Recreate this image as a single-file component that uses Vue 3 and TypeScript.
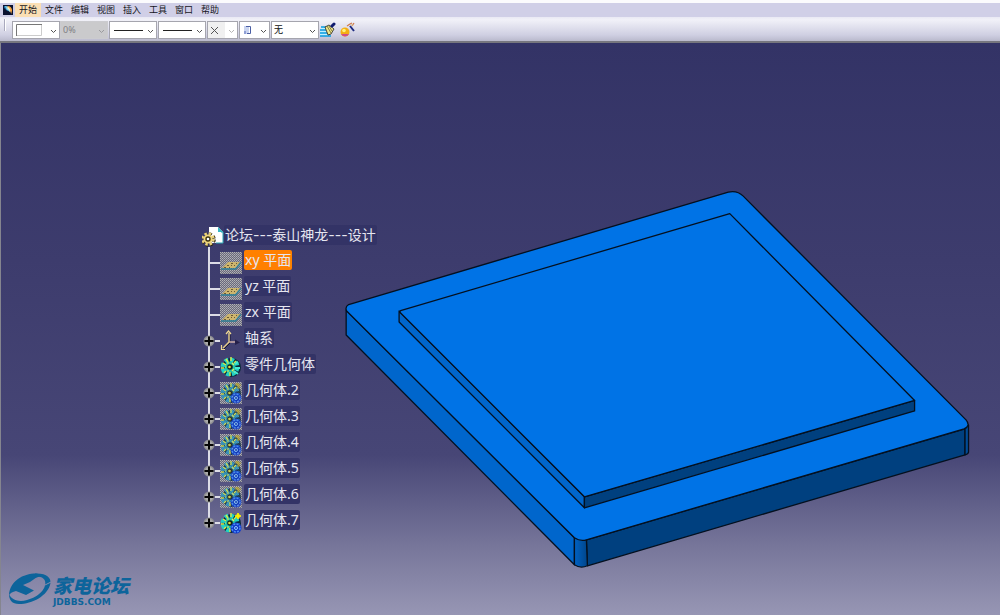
<script setup lang="ts">
import { ref } from 'vue'

type IconKind = 'plane' | 'axis' | 'part' | 'body' | 'active'

interface TreeNode {
  label: string
  icon: IconKind
  expandable: boolean
}

interface Combo {
  name: string
  kind: 'color' | 'opacity' | 'line' | 'point' | 'render' | 'layer'
  options: string[]
  narrow?: boolean
  disabled?: boolean
}

const menus: string[] = ['开始', '文件', '编辑', '视图', '插入', '工具', '窗口', '帮助']
const activeMenu = ref('开始')

const combos: Combo[] = [
  { name: '颜色', kind: 'color', options: ['自动'] },
  { name: '透明度', kind: 'opacity', options: ['0%'], disabled: true },
  { name: '线宽', kind: 'line', options: ['1'] },
  { name: '线型', kind: 'line', options: ['1'] },
  { name: '点', kind: 'point', options: ['1'], narrow: true },
  { name: '渲染', kind: 'render', options: ['1'], narrow: true },
  { name: '图层', kind: 'layer', options: ['无'] },
]

const nodes: TreeNode[] = [
  { label: 'xy 平面', icon: 'plane', expandable: false },
  { label: 'yz 平面', icon: 'plane', expandable: false },
  { label: 'zx 平面', icon: 'plane', expandable: false },
  { label: '轴系', icon: 'axis', expandable: true },
  { label: '零件几何体', icon: 'part', expandable: true },
  { label: '几何体.2', icon: 'body', expandable: true },
  { label: '几何体.3', icon: 'body', expandable: true },
  { label: '几何体.4', icon: 'body', expandable: true },
  { label: '几何体.5', icon: 'body', expandable: true },
  { label: '几何体.6', icon: 'body', expandable: true },
  { label: '几何体.7', icon: 'active', expandable: true },
]
const selected = ref('xy 平面')
</script>

<template>
  <div class="app">
    <nav class="menubar" aria-label="菜单">
      <svg class="app-icon" viewBox="0 0 11 11" aria-hidden="true">
        <rect width="11" height="11" fill="#0b1230" />
        <path d="M1 1h4l1 3-1 3-4-4z" fill="#1f6fa8" />
        <path d="M2 1l4 1 2 6-4-3z" fill="#7fd4ee" />
        <path d="M5 1c3 0 5 2 5 5l-1 4C8 6 7 4 5 3z" fill="#f3a13c" />
        <path d="M5 2c2 1 3 2 3 6C7 6 6 4 5 4z" fill="#fff3c8" />
      </svg>
      <button
        v-for="m in menus"
        :key="m"
        type="button"
        class="menu"
        :class="{ active: m === activeMenu }"
        @click="activeMenu = m"
      >{{ m }}</button>
    </nav>

    <div class="toolbar" role="toolbar" aria-label="图形属性">
      <span class="grip"></span>
      <label
        v-for="c in combos"
        :key="c.name"
        class="combo"
        :class="[c.kind, { narrow: c.narrow }]"
      >
        <select :aria-label="c.name" :disabled="c.disabled">
          <option v-for="o in c.options" :key="o">{{ o }}</option>
        </select>
        <svg v-if="c.kind === 'color'" class="sample" viewBox="0 0 36 16" aria-hidden="true">
          <rect x="3" y="2" width="26" height="12" fill="#fff" />
          <path d="M3.500 14V2.500H29" fill="none" stroke="#777" />
          <path d="M4 13.500H28.500V3" fill="none" stroke="#ccc" />
        </svg>
        <svg v-else-if="c.kind === 'line'" class="sample" viewBox="0 0 36 16" aria-hidden="true">
          <path d="M4 8.500H33" stroke="#222" />
        </svg>
        <svg v-else-if="c.kind === 'point'" class="sample" viewBox="0 0 36 16" aria-hidden="true">
          <rect width="17" height="16" fill="#f0f0f0" />
          <path d="M3 5l7 7M10 5l-7 7" stroke="#555" />
        </svg>
        <svg v-else-if="c.kind === 'render'" class="sample" viewBox="0 0 36 16" aria-hidden="true">
          <rect x="4" y="4" width="5" height="8" fill="#c9d4f0" />
          <path d="M6 4.500H10.500V11.500H7" fill="none" stroke="#4a5ea4" />
          <rect x="4" y="9" width="2" height="3" fill="#8f9fd4" />
        </svg>
        <svg class="chevron" viewBox="0 0 7 5" aria-hidden="true">
          <path d="M1 1l2.500 2.500L6 1" fill="none" stroke="currentColor" />
        </svg>
      </label>
      <button type="button" class="tool" aria-label="格式刷">
        <svg viewBox="0 0 16 16" aria-hidden="true">
          <path d="M2 5h6L5 8H0zM0 9h6l3 5H0z" fill="#bff0ff" />
          <path d="M1 5h6M0 8h6M0 11h8M0 14h11" stroke="#0a9be0" stroke-width="1.500" />
          <path d="M5 5l4-2 5 4-3 5-3 1z" fill="#efe78a" stroke="#222" stroke-width=".8" />
          <path d="M7 4l4 7M9 4l3 5" stroke="#6b6330" stroke-width=".8" />
          <path d="M12 4l2-2" stroke="#101c6e" stroke-width="3" stroke-linecap="round" />
        </svg>
      </button>
      <button type="button" class="tool" aria-label="图形属性向导">
        <svg viewBox="0 0 16 16" aria-hidden="true">
          <circle cx="5" cy="10" r="4.500" fill="#f4ae13" />
          <path d="M1 12a4.500 4.500 0 0 0 8 0z" fill="#cf4c8c" />
          <circle cx="4" cy="8.500" r="1.800" fill="#fff27a" />
          <path d="M10 4l4 5" stroke="#1d2a80" stroke-width="2" />
          <path d="M7 4l3-2M10 2l2-1M12 4l2-3" stroke="#d07a4b" stroke-width="1.300" />
          <path d="M11 3l2 0" stroke="#d7c08a" />
        </svg>
      </button>
    </div>

    <main class="viewport">
      <svg class="model" viewBox="0 43 1000 572" preserveAspectRatio="xMidYMid meet" role="img" aria-label="三维模型">
        <defs>
          <linearGradient id="fillet" x1="0" x2="1">
            <stop offset="0" stop-color="#0062c4" />
            <stop offset="1" stop-color="#00458a" />
          </linearGradient>
        </defs>
        <g stroke="#04101f" stroke-width="1.300" stroke-linejoin="round">
          <path d="M345.500 310V335L574 565V538z" fill="#0066cc" />
          <path d="M586 540L965 429V455L587 566z" fill="#00407f" />
          <path d="M574 538V565Q580 569 587 566L586 540z" fill="url(#fillet)" />
          <path d="M965 429L968.500 425V451Q969 454 965 455z" fill="#004b96" />
          <path d="M348 304.500L728 192Q737 190 743 196L966 420Q971 426 964 429L586 540Q580 542 574 538L346 311Q344 307 348 304.500z" fill="#0073e6" />
          <path d="M398.500 311V322L584 508V497z" fill="#0066cc" />
          <path d="M584 497L914.500 400.500V411L584 508z" fill="#00407f" />
          <path d="M400 310.500L729.500 213.500L914.500 400.500L584 497L399 312z" fill="#0073e6" />
        </g>
      </svg>

      <section class="tree" aria-label="结构树">
        <div class="root">
          <svg class="root-icon" viewBox="0 0 22 22" aria-hidden="true">
            <path d="M7 1h9l5 5v11H7z" fill="#fff" />
            <path d="M16 1v5h5z" fill="#37b7c3" />
            <path d="M19 6h2v11h-7" fill="none" stroke="#2aa7b5" />
            <circle cx="6.500" cy="13.500" r="5.500" fill="none" stroke="#2b230c" stroke-width="3.500" stroke-dasharray="2.500 1.820" />
            <circle cx="6" cy="13" r="5.500" fill="none" stroke="#ead27d" stroke-width="2.500" stroke-dasharray="2.500 1.820" />
            <circle cx="6" cy="13" r="3.600" fill="#3c3210" stroke="#f0d77c" stroke-width="1.800" />
            <circle cx="6" cy="13" r="1.300" fill="#fff" />
          </svg>
          <button type="button" class="label">论坛---泰山神龙---设计</button>
        </div>
        <ul class="nodes">
          <li v-for="n in nodes" :key="n.label" class="node">
            <button v-if="n.expandable" type="button" class="expander" :aria-label="'展开 ' + n.label">
              <svg viewBox="0 0 12 12" aria-hidden="true">
                <circle cx="6" cy="6" r="5.500" fill="#8f8f92" />
                <circle cx="6" cy="6" r="4" fill="#aaa" />
                <path d="M6 1.500v9M1.500 6h9" stroke="#050505" stroke-width="2" />
              </svg>
            </button>
            <span v-else class="stub"></span>
            <span class="link"></span>
            <svg class="node-icon" viewBox="0 0 22 22" aria-hidden="true">
              <defs>
                <pattern id="dither" width="2" height="2" patternUnits="userSpaceOnUse">
                  <rect width="2" height="2" fill="#686880" />
                  <rect width="1" height="1" fill="#b4b4b4" />
                  <rect x="1" y="1" width="1" height="1" fill="#a2a2a2" />
                </pattern>
              </defs>
              <template v-if="n.icon === 'plane'">
                <rect width="22" height="22" fill="url(#dither)" />
                <path d="M2 16L8 10H20L15 16z" fill="#cdb66e" />
                <path d="M4 15.500h2M7 13.500h2M11 11.500h2M9 15.500h1M14 13.500h1M16 11.500h1M11 13.500h1" stroke="#6b5934" />
                <path d="M1 17H15.500L21 10.500" fill="none" stroke="#2c7d92" stroke-width="1.300" />
              </template>
              <template v-else-if="n.icon === 'axis'">
                <path d="M10 3v10l-7 7" fill="none" stroke="#17152d" />
                <path d="M9 12V3M9 12L3 18" stroke="#e8cf86" stroke-width="1.400" />
                <path d="M9 12H17" stroke="#d9b7ac" stroke-width="1.400" />
                <path d="M6 4l2.500-3L11 4M1.500 15v4.500H5" fill="none" stroke="#f0d993" stroke-width="1.200" />
                <path d="M15 9.500l5 3-5 2.500z" fill="#25204a" />
              </template>
              <template v-else>
                <rect v-if="n.icon === 'body'" width="22" height="22" fill="url(#dither)" />
                <g :opacity="n.icon === 'body' ? 0.8 : 1">
                  <circle cx="11.500" cy="11.500" r="9.500" fill="#0a2a3a" />
                  <circle cx="10" cy="11" r="7" fill="none" :stroke="n.icon === 'body' ? '#2596c4' : '#22d0c4'" stroke-width="5" stroke-dasharray="3.600 1.900" />
                  <circle cx="10" cy="11" r="5.500" :fill="n.icon === 'body' ? '#1f8fb0' : '#1fc0ac'" />
                  <path d="M3 7l3 2M6 3l2 3M11 1v4M16 5l-2 2M1 12h3M4 17l2-2M10 20v-4M15 17l-1-2" stroke="#d8ea46" stroke-width="1.400" />
                  <path d="M5 11h1M7 7h2M12 7l2 2M7 15h2M12 15l2-2" stroke="#e5f04e" stroke-width="1.200" />
                  <circle cx="10" cy="11" r="2.800" fill="#142418" />
                  <circle cx="9.500" cy="11" r="1.300" fill="#dfe23a" />
                  <path v-if="n.icon === 'part'" d="M15 8l3-2M15 12h5M14 15l4 3" stroke="#46ead2" stroke-width="2" />
                </g>
                <g v-if="n.icon !== 'part'" :opacity="n.icon === 'body' ? 0.85 : 1">
                  <circle cx="16" cy="16" r="5.500" fill="#1036c8" />
                  <circle cx="16" cy="16" r="4" fill="none" stroke="#4d8df0" stroke-width="1.500" stroke-dasharray="2 1.140" />
                  <circle cx="16" cy="16" r="1.500" fill="none" stroke="#8fc8ff" />
                  <path v-if="n.icon === 'active'" d="M18 1l1 2 2 1-2 1-1 2-1-2-2-1 2-1z" fill="#fff000" stroke="#fff000" />
                  <path v-else d="M15 3h6M18 1v6M16 1l4 5" stroke="#b7a72a" stroke-width="1.200" />
                </g>
              </template>
            </svg>
            <button
              type="button"
              class="label"
              :class="{ selected: n.label === selected }"
              @click="selected = n.label"
            >{{ n.label }}</button>
          </li>
        </ul>
      </section>

      <footer class="brand">
        <svg class="brand-mark" viewBox="0 0 42 32" aria-hidden="true">
          <g fill="#0d649b">
            <path d="M0 22C1 8 14 0.500 27 0.500L34 2Q27 4 21 9L14 12L25 17.500L17 22L7 18Q2 19 0 22z" />
            <path d="M26 0.500C38 0 42 5 41.500 10C39 23 23 31 10 31C3 31 0 27 0 21C3 28 11 29 18 27C30 24 38 15 36 8C35 4 30 3 25 4z" />
          </g>
          <path d="M36 12l6-3" stroke="#8b8aab" />
        </svg>
        <div class="brand-text">
          <strong>家电论坛</strong>
          <span>JDBBS.COM</span>
        </div>
      </footer>
    </main>
  </div>
</template>

<style>
body {
  margin: 0;
}
</style>

<style scoped>
.app {
  display: flex;
  flex-direction: column;
  min-height: 100vh;
  font-family: 'Noto Sans', 'Noto Sans CJK SC', sans-serif;
}

button,
select {
  margin: 0;
  padding: 0;
  border: 0;
  background: none;
  font: inherit;
  color: inherit;
}

svg {
  display: block;
}

.menubar {
  display: flex;
  align-items: center;
  height: 14px;
  padding: 0 3px;
  border-top: 3px solid #fbfbfd;
  background: #d0cfe7;
}

.app-icon {
  width: 10px;
  height: 10px;
  margin-right: 2px;
}

.menu {
  height: 14px;
  padding: 0 4px;
  font-size: 9px;
  line-height: 14px;
  color: #16161c;
}

.menu.active {
  background: #fbdfb4;
}

.toolbar {
  display: flex;
  align-items: center;
  height: 24px;
  padding-left: 4px;
  border-bottom: 2px solid #77777f;
  background: linear-gradient(#e9e9f4, #f1f1f8 12%, #cfcfe2 75%, #b9b9cc);
}

.grip {
  width: 1px;
  height: 12px;
  margin: 0 6px 8px 0;
  border-right: 1px solid #fff;
  background: #a9a9bd;
}

.combo {
  position: relative;
  box-sizing: border-box;
  width: 48px;
  height: 18px;
  margin: 2px 1px 0 0;
  border: 1px solid #a5a5ae;
  background: #fff;
  color: #555;
  font-size: 9px;
}

.combo.color {
  margin-right: 0;
}

.combo.narrow {
  width: 31px;
}

.combo.opacity {
  border-color: #cbcbcf;
  background: #cacacc;
  color: #9a9a9e;
}

.combo select {
  appearance: none;
  display: block;
  width: 100%;
  height: 16px;
  padding-left: 2px;
  color: transparent;
  line-height: 16px;
  opacity: 1;
}

.combo.opacity select {
  color: #808084;
}

.combo.layer select {
  color: #111;
}

.sample {
  position: absolute;
  top: 0;
  left: 0;
  width: 36px;
  height: 16px;
  pointer-events: none;
}

.chevron {
  position: absolute;
  top: 7px;
  right: 2px;
  width: 7px;
  height: 5px;
  pointer-events: none;
}

.combo.point .chevron {
  color: #b5b5b5;
}

.tool {
  width: 16px;
  height: 16px;
  margin: 1px 4px 0 0;
}

.tool svg {
  width: 16px;
  height: 16px;
}

.viewport {
  position: relative;
  box-sizing: border-box;
  flex: 1;
  display: flex;
  flex-direction: column;
  justify-content: space-between;
  overflow: hidden;
  border-left: 1px solid #85858f;
  background: linear-gradient(#333366, #3d3c6d 38%, #474676 72%, #77769a 88%, #9796b4);
}

.model {
  position: absolute;
  inset: 0;
  width: 100%;
  height: 100%;
}

.tree {
  position: relative;
  align-self: flex-start;
  margin: 182px 0 0 201px;
  font-size: 14px;
  color: #e6e6f0;
}

.root {
  display: flex;
  align-items: flex-start;
  height: 23px;
  font-family: Inter, 'Noto Sans CJK SC', sans-serif;
}

.root-icon {
  width: 22px;
  height: 22px;
  margin-top: 1px;
}

.label {
  height: 20px;
  padding: 0 1px;
  border-radius: 2px;
  background: #333366;
  line-height: 20px;
  white-space: nowrap;
}

.label.selected {
  background: #ff8000;
}

.nodes {
  position: relative;
  margin: 0;
  padding: 0 0 0 1px;
  list-style: none;
}

.nodes::before {
  content: '';
  position: absolute;
  top: -1px;
  bottom: 10px;
  left: 6px;
  width: 2px;
  background: #dcdce6;
}

.node {
  position: relative;
  display: flex;
  align-items: flex-start;
  height: 26px;
}

.expander,
.stub {
  width: 12px;
  height: 12px;
  margin-top: 9px;
}

.expander svg {
  width: 12px;
  height: 12px;
}

.stub {
  background: linear-gradient(#dcdce6, #dcdce6) 6px 5px / 6px 2px no-repeat;
}

.link {
  width: 5px;
  height: 2px;
  margin-top: 14px;
  background: #dcdce6;
}

.node-icon {
  width: 22px;
  height: 22px;
  margin: 4px 2px 0 0;
}

.node .label {
  margin-top: 2px;
}

.brand {
  position: relative;
  display: flex;
  align-items: flex-start;
  gap: 2px;
  padding: 0 0 8px 8px;
  color: #0d649b;
}

.brand-mark {
  width: 42px;
  height: 32px;
}

.brand-text {
  display: flex;
  flex-direction: column;
  margin-top: 2px;
}

.brand-text strong {
  font-size: 19px;
  font-style: italic;
  font-weight: 900;
  line-height: 22px;
}

.brand-text span {
  font-family: 'DejaVu Sans', sans-serif;
  font-size: 9px;
  font-weight: 700;
  line-height: 10px;
}
</style>
